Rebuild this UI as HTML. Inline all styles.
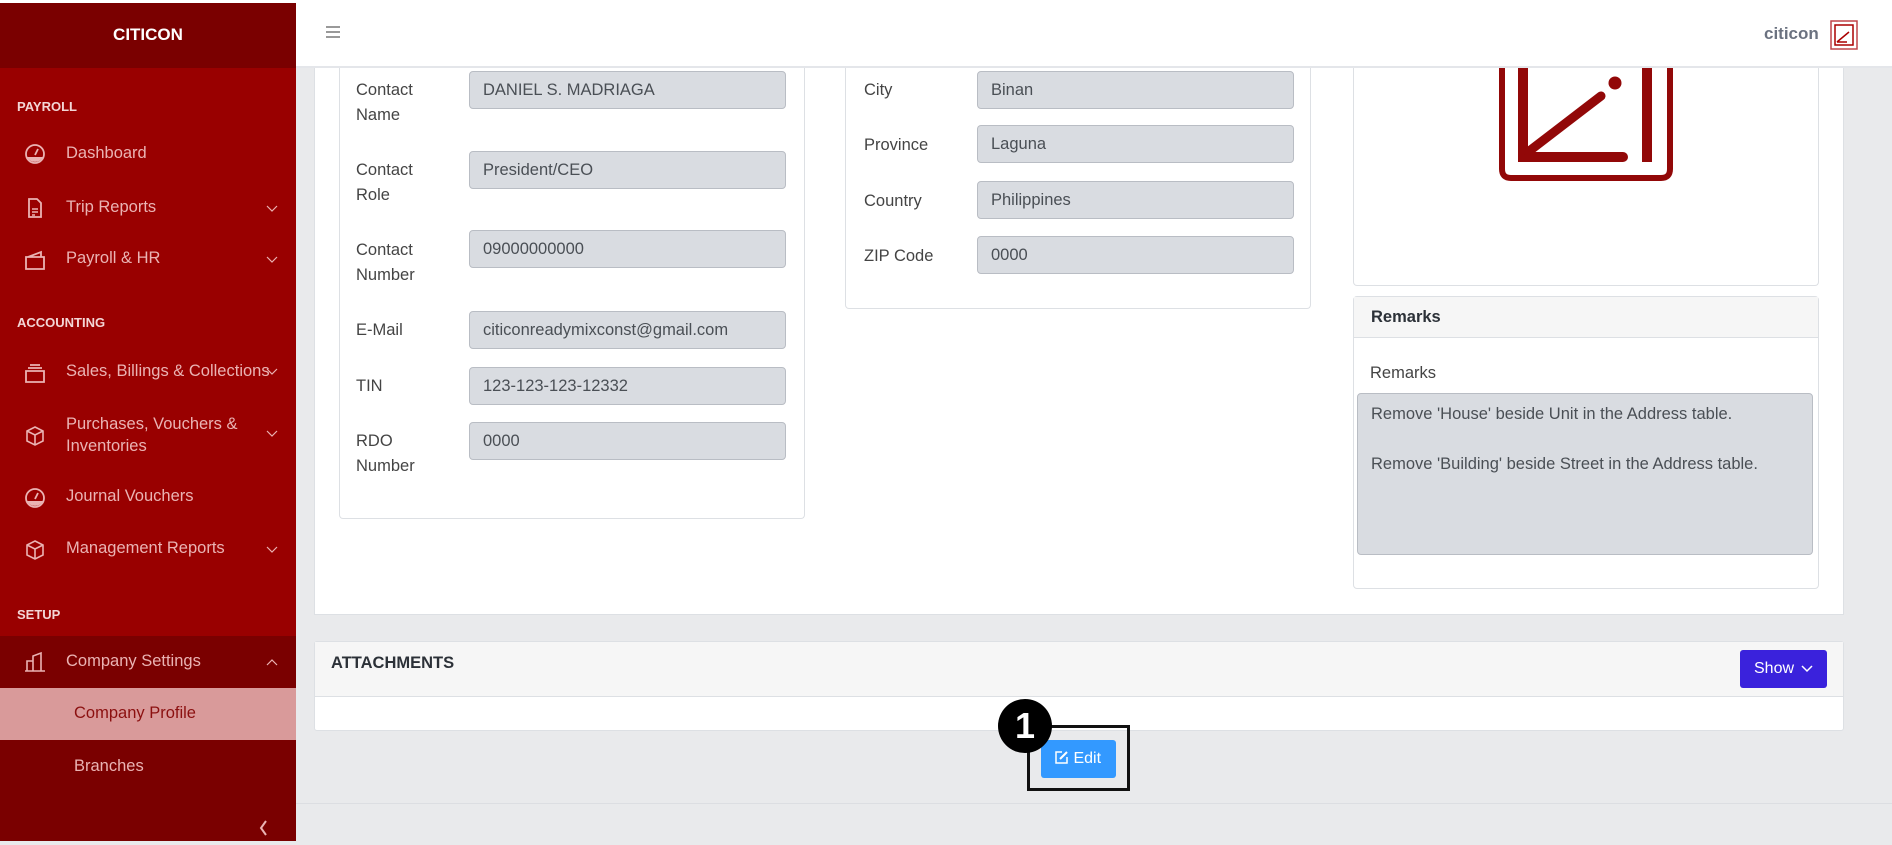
<!DOCTYPE html>
<html><head><meta charset="utf-8"><style>
*{box-sizing:border-box;margin:0;padding:0}
body{width:1892px;height:845px;overflow:hidden;background:#e9eaec;font-family:"Liberation Sans",sans-serif;position:relative;color:#3a3f45}
.a{position:absolute}
#sb{left:0;top:3px;width:296px;height:838px;background:#990000}
.sh{font-weight:bold;font-size:13px;color:#f3d6d6;left:17px}
.it{font-size:16.5px;color:#eab3b3;left:66px;white-space:nowrap}
.ic{left:24px;width:22px;height:22px}
.chev{left:266px;width:12px;height:8px}
.card{background:#fff;border:1px solid #dde0e4;border-radius:4px}
.lb{font-size:16.5px;color:#444;line-height:25px}
.in{background:#d9dce1;border:1px solid #b9bdc4;border-radius:4px;height:38px;font-size:16.5px;color:#4a4f55;padding:0 13px;line-height:36px}
</style></head><body>
<!-- main card -->
<div class="a" style="left:314px;top:60px;width:1530px;height:555px;background:#fff;border:1px solid #dde0e4;border-top:none"></div>
<div class="a card" style="left:339px;top:60px;width:466px;height:459px;border-top:none"></div>
<div class="a lb" style="left:356px;top:78px">Contact<br>Name</div>
<div class="a in" style="left:469px;top:71px;width:317px">DANIEL S. MADRIAGA</div>
<div class="a lb" style="left:356px;top:158px">Contact<br>Role</div>
<div class="a in" style="left:469px;top:151px;width:317px">President/CEO</div>
<div class="a lb" style="left:356px;top:238px">Contact<br>Number</div>
<div class="a in" style="left:469px;top:230px;width:317px">09000000000</div>
<div class="a lb" style="left:356px;top:318px">E-Mail</div>
<div class="a in" style="left:469px;top:311px;width:317px">citiconreadymixconst@gmail.com</div>
<div class="a lb" style="left:356px;top:374px">TIN</div>
<div class="a in" style="left:469px;top:367px;width:317px">123-123-123-12332</div>
<div class="a lb" style="left:356px;top:429px">RDO<br>Number</div>
<div class="a in" style="left:469px;top:422px;width:317px">0000</div>
<div class="a card" style="left:845px;top:60px;width:466px;height:249px;border-top:none"></div>
<div class="a lb" style="left:864px;top:78px">City</div>
<div class="a in" style="left:977px;top:71px;width:317px">Binan</div>
<div class="a lb" style="left:864px;top:133px">Province</div>
<div class="a in" style="left:977px;top:125px;width:317px">Laguna</div>
<div class="a lb" style="left:864px;top:189px">Country</div>
<div class="a in" style="left:977px;top:181px;width:317px">Philippines</div>
<div class="a lb" style="left:864px;top:244px">ZIP Code</div>
<div class="a in" style="left:977px;top:236px;width:317px">0000</div>
<div class="a card" style="left:1353px;top:60px;width:466px;height:226px;border-top:none"></div>
<svg class="a" style="left:1496px;top:60px" width="180" height="125" viewBox="0 0 180 125"><path d="M6 0 V109 Q6 118 15 118 H165 Q174 118 174 109 V0" fill="none" stroke="#920808" stroke-width="6"/><path d="M27 0 V97 H124" fill="none" stroke="#920808" stroke-width="10"/><path d="M124 97 H127" stroke="#920808" stroke-width="10" stroke-linecap="round"/><rect x="146" y="0" width="10" height="102" fill="#920808"/><path d="M32 92 L105 36" stroke="#920808" stroke-width="9" stroke-linecap="round"/><circle cx="119" cy="23" r="6.5" fill="#920808"/></svg>
<div class="a" style="left:1353px;top:296px;width:466px;height:293px;background:#fff;border:1px solid #dde0e4;border-radius:4px"></div>
<div class="a" style="left:1354px;top:297px;width:464px;height:41px;background:#f6f6f6;border-bottom:1px solid #dde0e4"></div>
<div class="a" style="left:1371px;top:308px;font-size:16.5px;font-weight:bold;color:#2c3138">Remarks</div>
<div class="a" style="left:1370px;top:364px;font-size:16.5px;color:#444">Remarks</div>
<div class="a" style="left:1357px;top:393px;width:456px;height:162px;background:#d9dce1;border:1px solid #b9bdc4;border-radius:4px;padding:8px 13px;font-size:16.5px;color:#4a4f55;line-height:25px">Remove 'House' beside Unit in the Address table.<br><br>Remove 'Building' beside Street in the Address table.</div>
<!-- topbar -->
<div class="a" style="left:0;top:0;width:1892px;height:3px;background:#fff"></div>
<div class="a" style="left:296px;top:0;width:1596px;height:68px;background:#fff;border-bottom:2px solid #e4e6ea"></div>
<div class="a" style="left:326px;top:26px;width:14px;height:12px;border-top:2px solid #999;border-bottom:2px solid #999"><div style="margin-top:3px;border-top:2px solid #999"></div></div>
<div class="a" style="left:1764px;top:24px;font-size:17px;font-weight:bold;color:#6b7280">citicon</div>
<svg class="a" style="left:1830px;top:20px" width="28" height="30" viewBox="0 0 28 30"><rect x="1" y="1" width="26" height="28" fill="#fff" stroke="#c0454a" stroke-width="1.5"/><rect x="5" y="5" width="18" height="20" fill="none" stroke="#a00" stroke-width="1.5"/><path d="M7 22 L19 12 M7 22 H17" stroke="#a00" stroke-width="1.5" fill="none"/></svg>
<!-- sidebar -->
<div id="sb" class="a">
<div class="a" style="left:0;top:0;width:296px;height:65px;background:#7a0000"></div>
<div class="a" style="left:0;top:22px;width:296px;text-align:center;color:#fff;font-weight:bold;font-size:17px">CITICON</div>
</div>
<div class="a sh" style="top:99px">PAYROLL</div>
<svg class="a ic" style="top:143px" viewBox="0 0 22 22"><circle cx="11" cy="11" r="9" fill="none" stroke="#eab3b3" stroke-width="1.8"/><path d="M3 14 H19 A9 9 0 0 1 3 14Z" fill="#eab3b3"/><path d="M11 12 L14 6" stroke="#eab3b3" stroke-width="1.8"/></svg>
<div class="a it" style="top:144px">Dashboard</div>
<svg class="a ic" style="top:197px" viewBox="0 0 22 22"><path d="M5 2 H13 L17 6 V20 H5Z" fill="none" stroke="#eab3b3" stroke-width="1.8"/><path d="M8 12H14M8 15H14M8 18H11" stroke="#eab3b3" stroke-width="1.4"/></svg>
<div class="a it" style="top:198px">Trip Reports</div>
<svg class="a chev" style="top:205px" viewBox="0 0 12 8"><path d="M1 1L6 6L11 1" fill="none" stroke="#eab3b3" stroke-width="1.2"/></svg>
<svg class="a ic" style="top:249px" viewBox="0 0 22 22"><path d="M2 8 H20 V20 H2Z M4 8 L17 3 V8" fill="none" stroke="#eab3b3" stroke-width="1.8"/></svg>
<div class="a it" style="top:249px">Payroll &amp; HR</div>
<svg class="a chev" style="top:256px" viewBox="0 0 12 8"><path d="M1 1L6 6L11 1" fill="none" stroke="#eab3b3" stroke-width="1.2"/></svg>
<div class="a sh" style="top:315px">ACCOUNTING</div>
<svg class="a ic" style="top:362px" viewBox="0 0 22 22"><path d="M2 9 H20 V20 H2Z M4 6H18 M6 3H16" fill="none" stroke="#eab3b3" stroke-width="1.8"/></svg>
<div class="a it" style="top:362px">Sales, Billings &amp; Collections</div>
<svg class="a chev" style="top:368px" viewBox="0 0 12 8"><path d="M1 1L6 6L11 1" fill="none" stroke="#eab3b3" stroke-width="1.2"/></svg>
<svg class="a ic" style="top:425px" viewBox="0 0 22 22"><path d="M11 2 L19 6 V16 L11 20 L3 16 V6Z M3 6 L11 10 L19 6 M11 10 V20" fill="none" stroke="#eab3b3" stroke-width="1.6"/></svg>
<div class="a it" style="top:413px;line-height:22px">Purchases, Vouchers &amp;<br>Inventories</div>
<svg class="a chev" style="top:430px" viewBox="0 0 12 8"><path d="M1 1L6 6L11 1" fill="none" stroke="#eab3b3" stroke-width="1.2"/></svg>
<svg class="a ic" style="top:487px" viewBox="0 0 22 22"><circle cx="11" cy="11" r="9" fill="none" stroke="#eab3b3" stroke-width="1.8"/><path d="M3 14 H19 A9 9 0 0 1 3 14Z" fill="#eab3b3"/><path d="M11 12 L14 6" stroke="#eab3b3" stroke-width="1.8"/></svg>
<div class="a it" style="top:487px">Journal Vouchers</div>
<svg class="a ic" style="top:539px" viewBox="0 0 22 22"><path d="M11 2 L19 6 V16 L11 20 L3 16 V6Z M3 6 L11 10 L19 6 M11 10 V20" fill="none" stroke="#eab3b3" stroke-width="1.6"/></svg>
<div class="a it" style="top:539px">Management Reports</div>
<svg class="a chev" style="top:546px" viewBox="0 0 12 8"><path d="M1 1L6 6L11 1" fill="none" stroke="#eab3b3" stroke-width="1.2"/></svg>
<div class="a sh" style="top:607px">SETUP</div>
<div class="a" style="left:0;top:636px;width:296px;height:52px;background:#7a0000"></div>
<svg class="a ic" style="top:651px" viewBox="0 0 22 22"><path d="M3 20 V10 H9 V20 M9 20 V5 L17 2 V20 M1 20 H21" fill="none" stroke="#eab3b3" stroke-width="1.6"/></svg>
<div class="a it" style="top:652px">Company Settings</div>
<svg class="a chev" style="top:658px" viewBox="0 0 12 8"><path d="M1 7L6 2L11 7" fill="none" stroke="#eab3b3" stroke-width="1.2"/></svg>
<div class="a" style="left:0;top:688px;width:296px;height:52px;background:#d99a9a"></div>
<div class="a" style="left:74px;top:704px;font-size:16.5px;color:#8b1010">Company Profile</div>
<div class="a" style="left:0;top:740px;width:296px;height:101px;background:#7a0000"></div>
<div class="a" style="left:74px;top:757px;font-size:16.5px;color:#eab3b3">Branches</div>
<svg class="a" style="left:258px;top:820px" width="10" height="16" viewBox="0 0 10 16"><path d="M8 1 L3 8 L8 15" fill="none" stroke="#eab3b3" stroke-width="2"/></svg>
<!-- attachments -->
<div class="a" style="left:314px;top:641px;width:1530px;height:90px;background:#fff;border:1px solid #dde0e4;border-radius:3px"></div>
<div class="a" style="left:315px;top:642px;width:1528px;height:55px;background:#f6f6f6;border-bottom:1px solid #dde0e4"></div>
<div class="a" style="left:331px;top:654px;font-size:16.5px;font-weight:bold;color:#2c3138">ATTACHMENTS</div>
<div class="a" style="left:1740px;top:650px;width:87px;height:38px;background:#3a22dc;border-radius:3px;color:#fff;font-size:16px;padding:10px 0 0 14px">Show <svg width="12" height="8" viewBox="0 0 12 8" style="margin-left:3px"><path d="M1 1L6 6L11 1" fill="none" stroke="#fff" stroke-width="1.5"/></svg></div>
<!-- edit -->
<div class="a" style="left:1027px;top:725px;width:103px;height:66px;border:3px solid #111"></div>
<div class="a" style="left:1041px;top:740px;width:75px;height:38px;background:#3399ff;border-radius:3px;color:#fff;font-size:16px;padding:10px 0 0 13px"><svg width="15" height="15" viewBox="0 0 15 15" style="vertical-align:-2px"><path d="M8 2H2V13H13V7" fill="none" stroke="#fff" stroke-width="1.5"/><path d="M6 9 L13 2" stroke="#fff" stroke-width="2"/></svg> Edit</div>
<div class="a" style="left:998px;top:699px;width:54px;height:54px;border-radius:50%;background:#000;color:#fff;font-size:36px;font-weight:bold;text-align:center;line-height:54px">1</div>
<div class="a" style="left:296px;top:803px;width:1596px;height:1px;background:#dcdee2"></div>
</body></html>
